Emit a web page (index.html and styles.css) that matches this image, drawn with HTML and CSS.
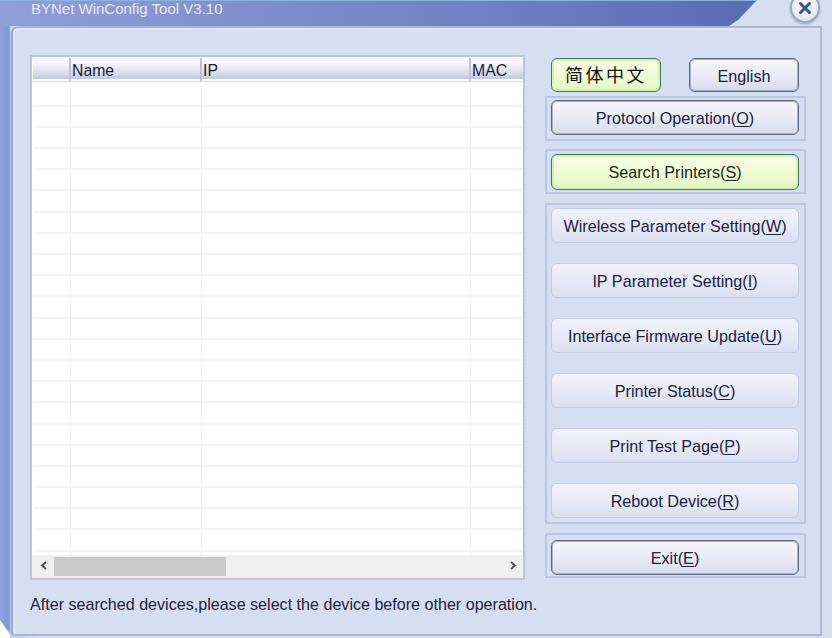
FILE: index.html
```html
<!DOCTYPE html>
<html lang="en">
<head>
<meta charset="utf-8">
<title>BYNet WinConfig Tool V3.10</title>
<link rel="stylesheet" href="styles.css">
</head>
<body>
<div class="window">
  <div class="titlebar">
    <div class="band"><span class="title">BYNet WinConfig Tool V3.10</span></div>
  </div>
  <button class="close" aria-label="Close">
    <svg width="16" height="16" viewBox="0 0 16 16"><path d="M3.5 3.5 12.5 12.5M12.5 3.5 3.5 12.5" stroke="#2f5a82" stroke-width="3" stroke-linecap="round"/></svg>
  </button>
  <div class="corner"></div>
  <div class="panel">
    <div class="left">
      <div class="list">
        <div class="head">
          <div class="hc c0"></div><div class="hc c1">Name</div><div class="hc c2">IP</div><div class="hc c3">MAC</div>
        </div>
        <div class="rows">
          <div class="row"><i class="c0"></i><i class="c1"></i><i class="c2"></i></div>
          <div class="row"><i class="c0"></i><i class="c1"></i><i class="c2"></i></div>
          <div class="row"><i class="c0"></i><i class="c1"></i><i class="c2"></i></div>
          <div class="row"><i class="c0"></i><i class="c1"></i><i class="c2"></i></div>
          <div class="row"><i class="c0"></i><i class="c1"></i><i class="c2"></i></div>
          <div class="row"><i class="c0"></i><i class="c1"></i><i class="c2"></i></div>
          <div class="row"><i class="c0"></i><i class="c1"></i><i class="c2"></i></div>
          <div class="row"><i class="c0"></i><i class="c1"></i><i class="c2"></i></div>
          <div class="row"><i class="c0"></i><i class="c1"></i><i class="c2"></i></div>
          <div class="row"><i class="c0"></i><i class="c1"></i><i class="c2"></i></div>
          <div class="row"><i class="c0"></i><i class="c1"></i><i class="c2"></i></div>
          <div class="row"><i class="c0"></i><i class="c1"></i><i class="c2"></i></div>
          <div class="row"><i class="c0"></i><i class="c1"></i><i class="c2"></i></div>
          <div class="row"><i class="c0"></i><i class="c1"></i><i class="c2"></i></div>
          <div class="row"><i class="c0"></i><i class="c1"></i><i class="c2"></i></div>
          <div class="row"><i class="c0"></i><i class="c1"></i><i class="c2"></i></div>
          <div class="row"><i class="c0"></i><i class="c1"></i><i class="c2"></i></div>
          <div class="row"><i class="c0"></i><i class="c1"></i><i class="c2"></i></div>
          <div class="row"><i class="c0"></i><i class="c1"></i><i class="c2"></i></div>
          <div class="row"><i class="c0"></i><i class="c1"></i><i class="c2"></i></div>
          <div class="row"><i class="c0"></i><i class="c1"></i><i class="c2"></i></div>
          <div class="row"><i class="c0"></i><i class="c1"></i><i class="c2"></i></div>
          <div class="row"><i class="c0"></i><i class="c1"></i><i class="c2"></i></div>
          <div class="row"><i class="c0"></i><i class="c1"></i><i class="c2"></i></div>
        </div>
        <div class="scrollbar">
          <svg class="arrow" width="20" height="21" viewBox="0 0 20 21"><path d="M12 7 8 10.5 12 14" fill="none" stroke="#555" stroke-width="2"/></svg>
          <div class="track"><div class="thumb"></div></div>
          <svg class="arrow" width="20" height="21" viewBox="0 0 20 21"><path d="M8 7 12 10.5 8 14" fill="none" stroke="#555" stroke-width="2"/></svg>
        </div>
      </div>
      <p class="status">After searched devices,please select the device before other operation.</p>
    </div>
    <div class="right">
      <div class="langs">
        <button class="btn green lang cn">简体中文</button>
        <button class="btn lang">English</button>
      </div>
      <div class="group g1"><button class="btn">Protocol Operation(<u>O</u>)</button></div>
      <div class="group g2"><button class="btn green">Search Printers(<u>S</u>)</button></div>
      <div class="group g3">
        <button class="btn soft">Wireless Parameter Setting(<u>W</u>)</button>
        <button class="btn soft">IP Parameter Setting(<u>I</u>)</button>
        <button class="btn soft">Interface Firmware Update(<u>U</u>)</button>
        <button class="btn soft">Printer Status(<u>C</u>)</button>
        <button class="btn soft">Print Test Page(<u>P</u>)</button>
        <button class="btn soft">Reboot Device(<u>R</u>)</button>
      </div>
      <div class="group g4"><button class="btn">Exit(<u>E</u>)</button></div>
    </div>
  </div>
</div>
</body>
</html>
```
FILE: styles.css
```css
* { box-sizing: border-box; }
html, body { margin: 0; padding: 0; background: #fff; }
body { width: 832px; height: 638px; overflow: hidden; font-family: "Liberation Sans", Arial, sans-serif; }

.window {
  position: relative;
  width: 832px;
  height: 638px;
  overflow: hidden;
  background: linear-gradient(90deg, #8ea3dc 0, #7f96d6 9px, #c9d5ee 11px, #d6dff2 40px);
}
.titlebar { height: 26px; }
.band {
  width: 757px;
  height: 26px;
  padding-left: 31px;
  background: linear-gradient(90deg, #8e9fd9 0, #8293cf 25%, #6d80c1 65%, #586cb1 100%);
  clip-path: polygon(0 0, 757px 0, 738px 20px, 729px 26px, 0 26px);
  box-shadow: inset 0 1px 0 #8fb0e0;
}
.title {
  display: block;
  font-size: 15px;
  line-height: 17px;
  color: #e4e9f8;
}
.close {
  position: absolute;
  left: 790px;
  top: -8px;
  width: 30px;
  height: 31px;
  padding: 0;
  border: 2px solid #9aa7bb;
  border-radius: 50%;
  background: radial-gradient(circle at 50% 35%, #fbfcff 0, #e3e9f5 70%, #c5d0e4 100%);
  box-shadow: 0 1px 2px #8e9cb8;
  display: flex;
  align-items: center;
  justify-content: center;
}
.corner {
  position: absolute;
  left: 0;
  top: 620px;
  width: 10px;
  height: 18px;
  background: #fff;
  clip-path: polygon(0 0, 10px 14px, 10px 18px, 0 18px);
}
.panel {
  margin-left: 11px;
  width: 811px;
  height: 610px;
  border: 2px solid #aab5d2;
  border-left-color: #9ba8cb;
  border-radius: 7px 2px 0 4px;
  background: #d6dff2;
  box-shadow: inset 2px 2px 0 #dfe5f5;
  padding: 27px 15px 0 17px;
  display: flex;
  gap: 20px;
}
.left { width: 495px; flex: none; }
.list {
  height: 525px;
  border: 2px solid #bcc5de;
  background: #fff;
  display: flex;
  flex-direction: column;
  padding: 1px 0 0 1px;
}
.head {
  display: flex;
  height: 24px;
  flex: none;
  border-bottom: 1px solid #d3d9ec;
  background: linear-gradient(180deg, #fbfbfe 0, #f3f3f9 6px, #d2d4e4 18px, #c4cce3 19px, #c4cce3 21px, #fff 21px);
}
.hc {
  font-size: 15.8px;
  line-height: 25px;
  color: #1a1a3a;
  padding-left: 1px;
  border-right: 2px solid #b9c1dc;
  flex: none;
}
.c0 { width: 38px; }
.c1 { width: 131px; }
.c2 { width: 269px; }
.hc.c3 { border-right: 0; flex: 1; }
.rows { flex: 1; overflow: hidden; padding-top: 3.5px; }
.row {
  height: 21.2px;
  display: flex;
  border-bottom: 2px solid #f3f3f3;
}
.row i { display: block; height: 100%; border-right: 1px solid #f1f1f1; flex: none; }
.scrollbar {
  height: 23px;
  flex: none;
  display: flex;
  background: #f0f0f0;
  align-items: flex-end;
  margin-left: -1px;
  padding-bottom: 2px;
}
.arrow { flex: none; display: block; }
.arrow:first-child { margin-left: 2px; }
.track { flex: 1; height: 19px; }
.thumb { width: 172px; height: 19px; background: #c9c9c9; }
.status {
  margin: 15px 0 0 0;
  font-size: 16.1px;
  line-height: 18px;
  color: #222236;
  white-space: nowrap;
}
.right { width: 261px; flex: none; }
.langs { display: flex; justify-content: space-between; padding: 3px 7px 0 6px; height: 41px; }
.group {
  border: 2px solid #bcc6e0;
  padding: 2px 5px 0 4px;
  display: flex;
  flex-direction: column;
}
.g1 { height: 45px; }
.g2 { height: 45px; margin-top: 8px; padding-top: 3px; }
.g2 .btn { height: 36px; padding-top: 0; }
.g3 { height: 321px; margin-top: 9px; gap: 20px; padding-top: 3px; }
.g4 { height: 45px; margin-top: 9px; padding-top: 5px; }
.btn {
  display: block;
  width: 248px;
  height: 35px;
  flex: none;
  padding: 2px 0 0;
  font-family: "Liberation Sans", Arial, sans-serif;
  font-size: 16.2px;
  color: #1c2040;
  border: 1px solid #5c6a7c;
  border-radius: 6px;
  box-shadow: inset 0 0 0 1px #aab3c6;
  background: linear-gradient(180deg, #f5f6fc 0, #ebedf7 45%, #d6dcee 100%);
}
.btn u { text-underline-offset: 2px; }
.btn.green {
  border-color: #4f7262;
  background: linear-gradient(180deg, #f8fee6 0, #effcd4 50%, #e2f9c2 100%);
  color: #20281c;
  box-shadow: inset 0 0 0 2px #d2f3b4;
}
.btn.soft {
  border-color: #c4cde4;
  box-shadow: none;
  background: linear-gradient(180deg, #eff1fa 0, #e9ecf7 45%, #d9dff0 100%);
}
.btn.lang { width: 110px; height: 34px; }
.btn.cn {
  padding: 0 0 2px;
  font-family: "Noto Sans CJK SC", "Liberation Sans", sans-serif;
  font-size: 18px;
  letter-spacing: 2.5px;
  color: #111;
  line-height: 24px;
}
```
